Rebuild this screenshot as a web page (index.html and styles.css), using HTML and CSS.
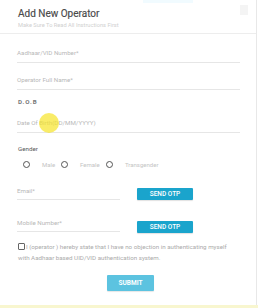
FILE: index.html
```html
<!DOCTYPE html>
<html>
<head>
<meta charset="utf-8">
<link rel="stylesheet" href="styles.css">
</head>
<body>
<div class="page">
  <div class="modal">
    <div class="topstrip"></div>
    <div class="header">
      <div class="title">Add New Operator</div>
      <div class="subtitle">Make Sure To Read All Instructions First</div>
      <div class="close"></div>
    </div>
    <div class="body">
      <div class="field f1"><span class="label">Aadhaar/VID Number*</span></div>
      <div class="field f2"><span class="label">Operator Full Name*</span></div>
      <div class="section dob">D.O.B</div>
      <div class="field f3"><span class="label">Date Of Birth(DD/MM/YYYY)</span><span class="cursor"></span></div>
      <div class="section gender">Gender</div>
      <div class="radios">
        <div class="opt"><span class="radio"></span><span class="rlabel">Male</span></div>
        <div class="opt"><span class="radio"></span><span class="rlabel">Female</span></div>
        <div class="opt"><span class="radio"></span><span class="rlabel">Transgender</span></div>
      </div>
      <div class="otprow r1">
        <div class="field short"><span class="label">Email*</span></div>
        <button class="otp b1">SEND OTP</button>
      </div>
      <div class="otprow r2">
        <div class="field short"><span class="label">Mobile Number*</span></div>
        <button class="otp b2">SEND OTP</button>
      </div>
      <div class="consent"><span class="check"></span>I (operator ) hereby state that I have no objection in authenticating myself with Aadhaar based UID/VID authentication system.</div>
      <div class="actions"><button class="submit">SUBMIT</button></div>
    </div>
  </div>
  <div class="bottomstrip"></div>
</div>
</body>
</html>
```
FILE: styles.css
```css
html, body {
  margin: 0;
  padding: 0;
  background: #ffffff;
  font-family: Roboto, "Liberation Sans", sans-serif;
}
.page {
  width: 258px;
  height: 308px;
  overflow: hidden;
  position: relative;
}
.modal {
  width: 256px;
  height: 305px;
  border-right: 1px solid #e8e8e8;
  position: relative;
  background: #fff;
}
.topstrip {
  position: absolute;
  left: 143px;
  top: 0;
  width: 50px;
  height: 3px;
  background: #f1fbff;
}
.header {
  height: 34px;
  border-bottom: 1px solid #ededed;
  padding: 8px 18px 0;
  box-sizing: border-box;
  position: relative;
}
.title {
  font-size: 10px;
  line-height: 11px;
  color: #4a4a4a;
  font-weight: 400;
  -webkit-text-stroke: 0.15px #4a4a4a;
}
.subtitle {
  font-size: 5.7px;
  line-height: 8px;
  margin-top: 2px;
  color: #d0d0d0;
}
.close {
  position: absolute;
  right: 8px;
  top: 5px;
  width: 8px;
  height: 10px;
  background: #f4f4f4;
}
.body {
  padding: 0 16px 0 17px;
}
.field {
  border-bottom: 1px solid #e6e6e6;
  padding-bottom: 5px;
  position: relative;
}
.label {
  display: block;
  font-size: 6.2px;
  line-height: 8px;
  color: #b8b8b8;
}
.f1 { margin-top: 15px; }
.f2 { margin-top: 13px; }
.f3 { margin-top: 13px; }
.section {
  font-size: 6.2px;
  line-height: 8px;
  color: #6a6a6a;
  padding-left: 1px;
}
.dob {
  margin-top: 8px;
  font-weight: 700;
  letter-spacing: 0.9px;
  color: #777;
}
.gender {
  margin-top: 12px;
  color: #5a5a5a;
}
.cursor {
  position: absolute;
  left: 22px;
  top: -6px;
  width: 20px;
  height: 20px;
  border-radius: 50%;
  background: rgba(246, 228, 40, 0.7);
}
.radios {
  margin-top: 6px;
  height: 10px;
  display: grid;
  grid-template-columns: 38px 45px auto;
  padding-left: 6px;
  align-items: center;
}
.opt {
  display: flex;
  align-items: center;
}
.radio {
  width: 5px;
  height: 5px;
  border: 1.6px solid #555;
  border-radius: 50%;
  margin-right: 12px;
}
.rlabel {
  font-size: 6px;
  color: #c4c4c4;
}
.otprow {
  display: flex;
  align-items: flex-start;
  gap: 17px;
}
.r1 { margin-top: 18px; }
.r2 { margin-top: 19px; }
.short {
  width: 103px;
  padding-bottom: 4px;
}
.otp {
  width: 56px;
  height: 12px;
  border: none;
  padding: 0;
  background: #1aa4cc;
  color: #fff;
  font-family: Roboto, "Liberation Sans", sans-serif;
  font-size: 6.5px;
  font-weight: 500;
  border-radius: 1px;
  box-shadow: 0 1px 1px rgba(0,0,0,0.12);
}
.b1 { margin-top: 1px; }
.b2 { margin-top: 2px; }
.consent {
  margin-top: 9px;
  font-size: 6.2px;
  line-height: 11px;
  color: #ababab;
  padding-left: 1px;
  padding-right: 8px;
}
.check {
  display: inline-block;
  width: 5px;
  height: 5px;
  border: 1px solid #666;
  border-radius: 1px;
  vertical-align: -1px;
  margin-right: 1px;
}
.actions {
  margin-top: 11px;
  display: flex;
  justify-content: center;
  padding-left: 4px;
}
.submit {
  width: 47px;
  height: 16px;
  border: none;
  padding: 0;
  background: #5cc3e0;
  color: #fff;
  font-family: Roboto, "Liberation Sans", sans-serif;
  font-size: 6.5px;
  font-weight: 700;
  border-radius: 1px;
  box-shadow: 0 1px 1px rgba(0,0,0,0.1);
}
.bottomstrip {
  height: 3px;
  background: #f8f6cf;
}
```
